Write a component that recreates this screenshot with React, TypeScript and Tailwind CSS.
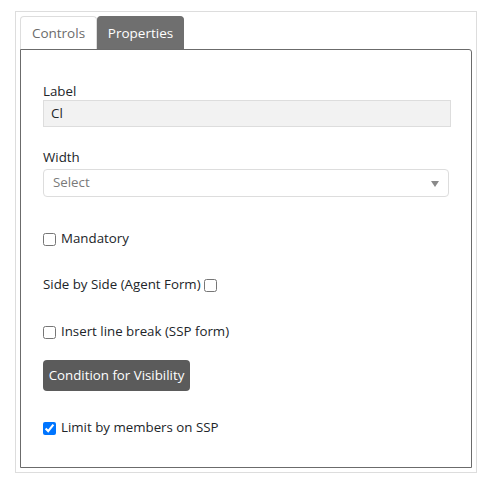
import React, { useState } from 'react';

const font = { fontFamily: '"Open Sans", "Noto Sans", Arial, sans-serif' };

const CheckRow: React.FC<{ label: string; checked?: boolean; after?: boolean; className?: string }> = ({ label, checked, after, className }) => {
  const [on, setOn] = useState(!!checked);
  const box = (
    <input
      type="checkbox"
      checked={on}
      onChange={() => setOn(!on)}
      className={`m-0 w-[13px] h-[13px] ${after ? 'ml-[3px]' : 'mr-[5px]'}`}
    />
  );
  return (
    <label className={`flex items-center h-[20px] text-[13.3px] text-[#212529] ${className ?? ''}`}>
      {!after && box}
      <span className="whitespace-nowrap">{label}</span>
      {after && box}
    </label>
  );
};

const App: React.FC = () => {
  const [tab, setTab] = useState<'controls' | 'properties'>('properties');

  return (
    <div style={font} className="bg-white min-h-screen pt-[11px] pl-[15px]">
      <div className="w-[462px] border border-[#dddddd] p-[4px]">
        {/* Tabs */}
        <div className="flex h-[33px]">
          <button
            onClick={() => setTab('controls')}
            className={`w-[77px] h-[33px] text-[13.5px] rounded-t-[4px] border border-b-0 ${tab === 'controls' ? 'bg-[#6f6f6f] text-white border-[#6f6f6f]' : 'text-[#6b6b6b] border-[#dddddd]'}`}
          >
            Controls
          </button>
          <button
            onClick={() => setTab('properties')}
            className={`w-[87px] h-[33px] text-[13.5px] rounded-t-[4px] border border-b-0 ${tab === 'properties' ? 'bg-[#6f6f6f] text-white border-[#6f6f6f]' : 'text-[#6b6b6b] border-[#dddddd]'}`}
          >
            Properties
          </button>
        </div>

        {/* Panel */}
        <div className="border border-[#6b6b6b] rounded-tr-[3px] px-[22px] pt-[32px] pb-[29px] text-[#212529]">
          <div className="text-[13.3px] leading-[18px]">Label</div>
          <div className="h-[27px] w-[408px] bg-[#f2f2f2] border border-[#dddddd] flex items-center pl-[7px] text-[13.3px]">
            Cl
          </div>

          <div className="mt-[21px] text-[13.3px] leading-[18px]">Width</div>
          <div className="mt-[3px] h-[28px] w-[406px] border border-[#dddddd] rounded-[4px] flex items-center justify-between pl-[9px] pr-[9px] text-[13.3px] text-[#7a7a7a]">
            <span>Select</span>
            <svg width="8" height="6" viewBox="0 0 8 6" className="mt-[1px]">
              <path d="M0 0 H8 L4 6 Z" fill="#8a8a8a" />
            </svg>
          </div>

          <CheckRow className="mt-[32px]" label="Mandatory" />
          <CheckRow className="mt-[26px]" label="Side by Side (Agent Form)" after />
          <CheckRow className="mt-[27px]" label="Insert line break (SSP form)" />

          <button className="mt-[18px] h-[31px] w-[147px] rounded-[4px] bg-[#5b5b5b] text-white text-[13.3px] whitespace-nowrap">
            Condition for Visibility
          </button>

          <CheckRow className="mt-[27px]" label="Limit by members on SSP" checked />
        </div>
      </div>
    </div>
  );
};

export default App;
